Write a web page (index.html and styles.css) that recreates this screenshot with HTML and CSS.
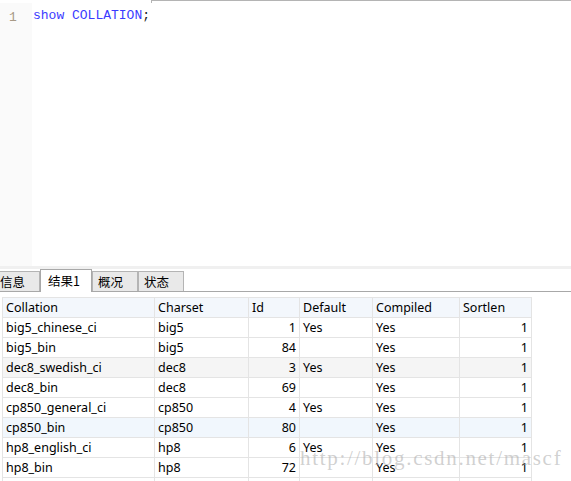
FILE: index.html
```html
<!DOCTYPE html>
<html>
<head>
<meta charset="utf-8">
<link rel="stylesheet" href="styles.css">
</head>
<body>
<div class="page">
  <div class="top-strip">
    <div class="top-gap"></div>
    <div class="top-rest"></div>
  </div>
  <div class="editor">
    <div class="gutter"><span class="ln">1</span></div>
    <div class="code"><span class="kw">show COLLATION</span><span class="punct">;</span></div>
  </div>
  <div class="splitter"></div>
  <div class="tabbar">
    <div class="tab first">信息</div>
    <div class="tab active">结果1</div>
    <div class="tab">概况</div>
    <div class="tab">状态</div>
  </div>
  <div class="grid-wrap">
    <table class="grid">
      <colgroup>
        <col class="c1"><col class="c2"><col class="c3"><col class="c4"><col class="c5"><col class="c6">
      </colgroup>
      <thead>
        <tr><th>Collation</th><th>Charset</th><th>Id</th><th>Default</th><th>Compiled</th><th>Sortlen</th></tr>
      </thead>
      <tbody>
        <tr><td>big5_chinese_ci</td><td>big5</td><td class="num">1</td><td>Yes</td><td>Yes</td><td class="num">1</td></tr>
        <tr><td>big5_bin</td><td>big5</td><td class="num">84</td><td></td><td>Yes</td><td class="num">1</td></tr>
        <tr class="hover"><td>dec8_swedish_ci</td><td>dec8</td><td class="num">3</td><td>Yes</td><td>Yes</td><td class="num">1</td></tr>
        <tr><td>dec8_bin</td><td>dec8</td><td class="num">69</td><td></td><td>Yes</td><td class="num">1</td></tr>
        <tr><td>cp850_general_ci</td><td>cp850</td><td class="num">4</td><td>Yes</td><td>Yes</td><td class="num">1</td></tr>
        <tr class="sel"><td>cp850_bin</td><td>cp850</td><td class="num">80</td><td></td><td>Yes</td><td class="num">1</td></tr>
        <tr><td>hp8_english_ci</td><td>hp8</td><td class="num">6</td><td>Yes</td><td>Yes</td><td class="num">1</td></tr>
        <tr><td>hp8_bin</td><td>hp8</td><td class="num">72</td><td></td><td>Yes</td><td class="num">1</td></tr>
        <tr><td></td><td></td><td></td><td></td><td></td><td></td></tr>
      </tbody>
    </table>
  </div>
  <div class="watermark">http://blog.csdn.net/mascf</div>
</div>
</body>
</html>
```

FILE: styles.css
```css
html, body {
  margin: 0;
  padding: 0;
  background: #ffffff;
}
.page {
  position: relative;
  width: 571px;
  height: 481px;
  overflow: hidden;
  font-family: "Noto Sans", "Noto Sans CJK SC", sans-serif;
  font-size: 12.5px;
  color: #000;
}
.top-strip {
  display: flex;
  height: 3px;
}
.top-gap {
  width: 151px;
}
.top-rest {
  flex: 1;
  border-top: 1px solid #b4b4b4;
  border-left: 1px solid #b4b4b4;
}
.editor {
  display: flex;
  height: 263px;
}
.gutter {
  width: 32px;
  background: #fafafa;
  box-sizing: border-box;
  padding-left: 9px;
  padding-top: 5px;
}
.ln {
  font-family: "Liberation Mono", monospace;
  font-size: 13px;
  color: #a89a86;
}
.code {
  padding-left: 1px;
  padding-top: 5px;
  font-family: "Liberation Mono", monospace;
  font-size: 13px;
}
.kw {
  color: #3b3bff;
}
.punct {
  color: #202020;
}
.splitter {
  height: 3px;
  background: #f0f0f0;
}
.tabbar {
  display: flex;
  align-items: flex-end;
  height: 22px;
  border-bottom: 1px solid #a8a8a8;
  font-family: "Noto Sans CJK SC", sans-serif;
  font-size: 12.5px;
}
.tab {
  box-sizing: border-box;
  height: 20px;
  line-height: 19px;
  width: 46px;
  padding-left: 5px;
  background: #e9e9e9;
  border: 1px solid #b4b4b4;
  border-bottom: none;
  color: #000;
}
.tab.first {
  width: 40px;
  padding-left: 0;
  border-left: none;
}
.tab.active {
  width: 52px;
  height: 23px;
  line-height: 21px;
  padding-left: 7px;
  background: #ffffff;
  margin-bottom: -1px;
  border-color: #a8a8a8;
}
.grid-wrap {
  padding: 5px 0 0 2px;
}
.grid {
  border-collapse: collapse;
  table-layout: fixed;
  width: 529px;
}
.c1 { width: 152px; }
.c2 { width: 94px; }
.c3 { width: 51px; }
.c4 { width: 73px; }
.c5 { width: 87px; }
.c6 { width: 72px; }
.grid th,
.grid td {
  height: 19px;
  padding: 0 3px 0 3px;
  border: 1px solid #e4e4e4;
  text-align: left;
  font-weight: normal;
  white-space: nowrap;
  overflow: hidden;
  line-height: 18px;
}
.grid th {
  background: #f3f7fc;
}
.grid td.num {
  text-align: right;
  padding-right: 3px;
}
.grid tr.hover td {
  background: #f5f5f5;
}
.grid tr.sel td {
  background: #f1f7fd;
}
.watermark {
  position: absolute;
  left: 300px;
  top: 446px;
  font-family: "Liberation Serif", serif;
  font-size: 21px;
  letter-spacing: 1.7px;
  color: rgba(170, 170, 170, 0.55);
  white-space: nowrap;
}
```
